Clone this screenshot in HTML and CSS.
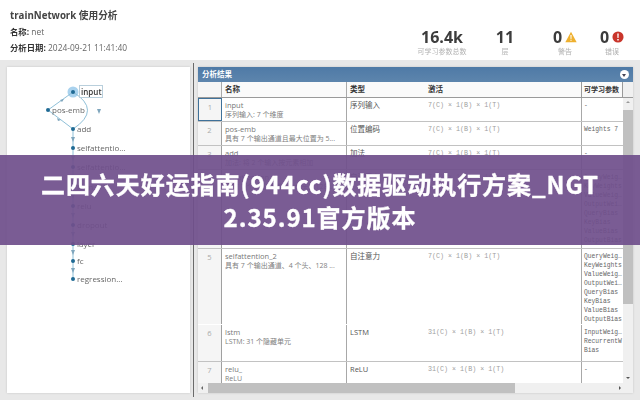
FILE: index.html
```html
<!DOCTYPE html>
<html lang="zh">
<head>
<meta charset="utf-8">
<title>trainNetwork 使用分析</title>
<link rel="stylesheet" href="styles.css">
</head>
<body>
<div class="shot">
  <header class="top">
    <div class="info">
      <h1>trainNetwork 使用分析</h1>
      <p><b>名称:</b> net</p>
      <p><b>分析日期:</b> 2024-09-21 11:41:40</p>
    </div>
    <div class="stats">
      <div class="stat s1"><strong>16.4k</strong><span>可学习参数总数</span></div>
      <div class="stat s2"><strong>11</strong><span>层</span></div>
      <div class="stat s3"><strong>0<svg class="ic" viewBox="0 0 14 13"><path d="M7 .5 13.6 12.5H.4Z" fill="#eeb02f"/><path d="M6.3 4.2h1.4l-.2 4.6h-1zM6.3 9.6h1.4v1.4H6.3z" fill="#fff"/></svg></strong><span>警告</span></div>
      <div class="stat s4"><strong>0<svg class="ic" viewBox="0 0 13 13"><circle cx="6.5" cy="6.5" r="6" fill="#c9352b"/><path d="M5.7 2.6h1.6l-.2 5h-1.2zM5.7 8.6h1.6v1.6H5.7z" fill="#fff"/></svg></strong><span>错误</span></div>
    </div>
  </header>
  <main class="body">
    <section class="graph">
      <svg class="net" viewBox="0 0 183 326" width="183" height="326">
        <circle cx="66" cy="25" r="5.5" fill="#a9d2ee"/>
        <path d="M66 25 41 43 66 62M66 25Q95 43 66 62M66 62V212" fill="none" stroke="#8fc0d8" stroke-width="1"/>
        <path d="M53 33l4-1-2 3zM90 42l4 0-2 5zM50 51l4 2-3 1zM64 70h4l-2 5zM64 89h4l-2 5zM64 108h4l-2 5zM64 127h4l-2 5zM64 146h4l-2 5zM64 165h4l-2 5zM64 183h4l-2 5zM64 201h4l-2 5z" fill="#7fa6bd"/>
        <g fill="#1f6a94">
          <circle cx="66" cy="25" r="2"/><circle cx="41" cy="43" r="2"/><circle cx="66" cy="62" r="2"/><circle cx="66" cy="81" r="2"/><circle cx="66" cy="100" r="2"/><circle cx="66" cy="120" r="2"/><circle cx="66" cy="139" r="2"/><circle cx="66" cy="158" r="2"/><circle cx="66" cy="177" r="2"/><circle cx="66" cy="194" r="2"/><circle cx="66" cy="212" r="2"/>
        </g>
        <rect x="72.500" y="18.500" width="23" height="12" fill="#fff" stroke="#b9cfdc"/>
        <g class="lbl">
          <text x="74" y="28" class="sel">input</text>
          <text x="45" y="46">pos-emb</text>
          <text x="70" y="65">add</text>
          <text x="70" y="84">selfattentio...</text>
          <text x="70" y="103">selfattentio...</text>
          <text x="70" y="123">lstm</text>
          <text x="70" y="142">relu</text>
          <text x="70" y="161">dropout</text>
          <text x="70" y="180">layer</text>
          <text x="70" y="197">fc</text>
          <text x="70" y="215">regression...</text>
        </g>
      </svg>
    </section>
    <div class="split"></div>
    <section class="results">
      <div class="bar"><span>分析结果</span><i class="fold"></i></div>
      <div class="grid">
        <div class="head">
          <div class="c0"></div><div class="c1">名称</div><div class="c2">类型</div><div class="c3">激活</div><div class="c4">可学习参数</div><div class="corner"></div>
        </div>
        <div class="mid">
          <div class="rows">
            <div class="row h24 first"><div class="c0">1</div><div class="c1"><em>input</em><small>序列输入: 7 个维度</small></div><div class="c2">序列输入</div><div class="c3 mono">7(C) × 1(B) × 1(T)</div><div class="c4 mono">-</div></div>
            <div class="row h24"><div class="c0">2</div><div class="c1"><em>pos-emb</em><small>具有 7 个输出通道且最大位置为 5...</small></div><div class="c2">位置编码</div><div class="c3 mono">7(C) × 1(B) × 1(T)</div><div class="c4 mono">Weights 7</div></div>
            <div class="row h24"><div class="c0">3</div><div class="c1"><em>add</em><small>加法: 将 2 个输入按元素相加</small></div><div class="c2">加法</div><div class="c3 mono">7(C) × 1(B) × 1(T)</div><div class="c4 mono">-</div></div>
            <div class="row h79"><div class="c0">4</div><div class="c1"><em>selfattention_1</em><small>具有 7 个输出通道、4 个头、128 ...</small></div><div class="c2">自注意力</div><div class="c3 mono">7(C) × 1(B) × 1(T)</div><div class="c4 mono">QueryWeig…<br>KeyWeights<br>ValueWeig…<br>OutputWei…<br>QueryBias<br>KeyBias<br>ValueBias<br>OutputBias</div></div>
            <div class="row h76 open"><div class="c0">5</div><div class="c1"><em>selfattention_2</em><small>具有 7 个输出通道、4 个头、128 ...</small></div><div class="c2">自注意力</div><div class="c3 mono">7(C) × 1(B) × 1(T)</div><div class="c4 mono">QueryWeig…<br>KeyWeights<br>ValueWeig…<br>OutputWei…<br>QueryBias<br>KeyBias<br>ValueBias<br>OutputBias</div></div>
            <div class="row h37"><div class="c0">6</div><div class="c1"><em>lstm</em><small>LSTM: 31 个隐藏单元</small></div><div class="c2">LSTM</div><div class="c3 mono">31(C) × 1(B) × 1(T)</div><div class="c4 mono">InputWeig…<br>RecurrentW<br>Bias</div></div>
            <div class="row h24"><div class="c0">7</div><div class="c1"><em>relu_</em><small>ReLU</small></div><div class="c2">ReLU</div><div class="c3 mono">31(C) × 1(B) × 1(T)</div><div class="c4 mono">-</div></div>
          </div>
          <div class="vscroll"><i class="up"></i><b></b><i class="down"></i></div>
        </div>
        <div class="hscroll"><i class="left"></i><b></b><i class="right"></i></div>
      </div>
    </section>
  </main>
  <div class="banner">二四六天好运指南(944cc)数据驱动执行方案_NGT 2.35.91官方版本</div>
</div>
</body>
</html>
```
FILE: styles.css
```css
* { box-sizing: border-box; }
html, body { margin: 0; height: 100%; }
body { width: 640px; height: 400px; overflow: hidden; background: #e8e8e8; font-family: "Open Sans", "Noto Sans CJK SC", sans-serif; color: #333; }
.shot { position: relative; width: 640px; height: 400px; }
.top { height: 60px; background: #fff; display: flex; justify-content: space-between; padding: 9px 0 0 10px; filter: blur(.35px); }
.info h1 { margin: 0 0 4px; font-size: 9.700px; line-height: 13px; font-weight: 700; color: #444; }
.info p { margin: 0 0 4px; font-size: 8.400px; line-height: 12px; color: #666; }
.info p b { color: #333; }
.stats { display: flex; padding-top: 18px; }
.stat { display: flex; flex-direction: column; align-items: center; }
.stat strong { display: flex; align-items: center; font-size: 16px; line-height: 20px; font-weight: 700; color: #3c3c3c; }
.stat span { font-size: 7px; line-height: 9px; color: #b0b0b0; }
.s1 { width: 54px; margin-right: 23px; }
.s2 { width: 26px; margin-right: 32px; }
.s3 { width: 30px; margin-right: 17px; }
.s4 { width: 30px; margin-right: 13px; }
.ic { width: 12px; height: 12px; margin-left: 3px; }
.body { height: 340px; display: flex; padding: 7px; filter: blur(.45px); }
.graph { width: 183px; height: 326px; background: #fff; box-shadow: 0 0 2px #c4c4c4; }
.net { display: block; }
.lbl text { font: 8px "Open Sans", sans-serif; fill: #666; }
.lbl .sel { font-weight: 600; fill: #333; }
.split { width: 1px; height: 334px; margin: -4px 4px 0 3px; background: #6a6a6a; }
.results { width: 435px; height: 326px; background: #f0f0f0; display: flex; flex-direction: column; box-shadow: 0 0 2px #c4c4c4; overflow: hidden; }
.bar { height: 15px; flex: none; background: linear-gradient(#4f7aa6, #5d85ad); color: #fff; font-size: 7.500px; font-weight: 700; line-height: 15px; padding: 0 4px; display: flex; justify-content: space-between; align-items: center; }
.fold { width: 9px; height: 9px; border-radius: 50%; background: #fff; position: relative; }
.fold::after { content: ""; position: absolute; left: 2px; top: 3.500px; border: 2.500px solid transparent; border-top: 3px solid #445; border-bottom: 0; }
.grid { flex: 1; display: flex; flex-direction: column; min-height: 0; background: #fff; }
.head { height: 16px; flex: none; display: flex; background: #fafafa; border-bottom: 1px solid #9a9a9a; font-size: 7.500px; font-weight: 700; line-height: 15px; color: #333; }
.c0 { width: 24px; flex: none; }
.c1 { width: 125px; flex: none; }
.c2 { width: 78px; flex: none; }
.c3 { width: 157px; flex: none; }
.c4 { width: 41px; flex: none; overflow: hidden; white-space: nowrap; }
.head > div { padding-left: 3px; }
.head .c3 { border-right: 1px solid #9a9a9a; }
.head .c0 { background: #f5f5f5; border-right: 1px solid #aaa; }
.head .c1 { border-right: 1px solid #aaa; }
.head .c4 { border-right: 1px solid #9a9a9a; font-size: 7px; padding-left: 2px; }
.head .corner { flex: 1; background: #f0f0f0; }
.mid { flex: 1; display: flex; min-height: 0; }
.rows { width: 425px; flex: none; overflow: hidden; }
.row { display: flex; border-bottom: 1px solid #c2c2c2; font-size: 7.500px; line-height: 9px; color: #555; overflow: hidden; }
.row.open { border-bottom-color: transparent; }
.row > div { padding: 3px 0 0 3px; }
.row > .c1 { border-right: 1px solid #a8a8a8; }
.row > .c3 { border-right: 1px solid #a8a8a8; color: #a0a0a0; }
.row > .c4 { padding-left: 2px; font-size: 6.300px; }
.row > .c0 { background: #f5f5f5; text-align: center; color: #aaa; padding: 4px 0 0; border-right: 1px solid #a0a0a0; }
.first > .c0 { border: 1px solid #3f7199; }
.h24 { height: 24px; }
.h37 { height: 37px; }
.h76 { height: 76px; }
.h79 { height: 79px; }
.row em { display: block; font-style: normal; color: #777; }
.row small { display: block; font-size: 7px; line-height: 10px; color: #808080; white-space: nowrap; overflow: hidden; }
.mono { font-family: "Liberation Mono", "Noto Sans CJK SC", monospace; font-size: 6.700px; color: #666; }
.vscroll { flex: 1; background: #f0f0f0; display: flex; flex-direction: column; }
.vscroll b { display: block; height: 194px; background: #c0c0c0; }
.vscroll i { display: block; height: 12px; flex: none; position: relative; }
.vscroll .down { margin-top: auto; height: 10px; }
.up::after, .down::after, .left::after, .right::after { content: ""; position: absolute; border: 2px solid transparent; }
.up::after { left: 3px; top: 3px; border-bottom-color: #999; border-top: 0; }
.down::after { left: 3px; top: 4px; border-top-color: #555; border-bottom: 0; }
.hscroll { height: 10px; flex: none; display: flex; background: #f0f0f0; }
.hscroll b { display: block; width: 307px; background: #c0c0c0; }
.hscroll i { display: block; width: 10px; position: relative; }
.hscroll .right { margin-left: auto; width: 20px; }
.left::after { left: 3px; top: 3px; border-right-color: #666; border-left: 0; }
.right::after { left: 6px; top: 3px; border-left-color: #555; border-right: 0; }
.banner { position: absolute; left: 0; top: 155px; width: 640px; height: 90px; padding: 12px 30px 0; background: rgba(112, 80, 140, .93); color: #fff; font: 700 24px/33px "Noto Sans CJK SC", sans-serif; text-align: center; letter-spacing: .95px; -webkit-text-stroke: .35px #fff; }
```
